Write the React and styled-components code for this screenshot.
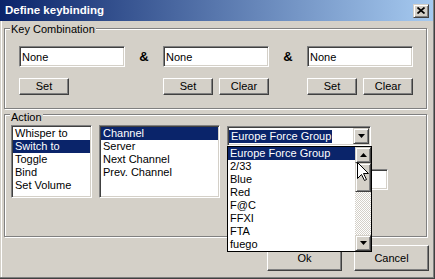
import styled, { css, createGlobalStyle } from "styled-components";

const GlobalStyle = createGlobalStyle`
  html, body {
    margin: 0;
    padding: 0;
    background: #d4d0c8;
  }
  body {
    font-family: "Liberation Sans", Arial, sans-serif;
    font-size: 11px;
    color: #000;
  }
`;

const actions = ["Whisper to", "Switch to", "Toggle", "Bind", "Set Volume"];
const targets = ["Channel", "Server", "Next Channel", "Prev. Channel"];
const channels = ["Europe Force Group", "2/33", "Blue", "Red", "F@C", "FFXI", "FTA", "fuego"];

// classic 3d edges
const raised = css`
  border: 1px solid;
  border-color: #fff #404040 #404040 #fff;
  box-shadow: inset -1px -1px 0 #808080;
`;

const raisedSmall = css`
  border: 1px solid;
  border-color: #d4d0c8 #404040 #404040 #d4d0c8;
  box-shadow: inset 1px 1px 0 #fff, inset -1px -1px 0 #808080;
`;

const sunken = css`
  border: 1px solid;
  border-color: #808080 #fff #fff #808080;
  box-shadow: inset 1px 1px 0 #404040, inset -1px -1px 0 #d4d0c8;
`;

const Window = styled.div`
  position: relative;
  width: 435px;
  height: 279px;
  box-sizing: border-box;
  display: flex;
  flex-direction: column;
  background: #d4d0c8;
  padding: 0 1px 1px 0;
  border-right: 1px solid #404040;
  border-bottom: 1px solid #404040;
  box-shadow: inset -1px -1px 0 #808080;
  overflow: hidden;
`;

const TitleBar = styled.div`
  height: 21px;
  flex-shrink: 0;
  display: flex;
  align-items: center;
  justify-content: space-between;
  padding: 0 4px 0 5px;
  background: linear-gradient(to right, #0a246a, #a6caf0);
  color: #fff;
  font-weight: bold;
  font-size: 11.5px;
  line-height: 13px;
`;

const CloseButton = styled.div`
  width: 16px;
  height: 14px;
  box-sizing: border-box;
  ${raisedSmall};
  background: #d4d0c8;
  display: flex;
  align-items: center;
  justify-content: center;
`;

const Body = styled.div`
  flex: 1;
  display: flex;
  flex-direction: column;
  padding: 7px 0 0 4px;
  box-shadow: inset 1px 0 0 #d4d0c8, inset 2px 0 0 #fff;
`;

const GroupBox = styled.div`
  position: relative;
  width: 423px;
  height: ${(p) => p.$height}px;
  margin-top: ${(p) => p.$gap || 0}px;
  box-sizing: border-box;
  border: 1px solid #808080;
  box-shadow: inset 1px 1px 0 #fff, 1px 1px 0 #fff;
`;

const GroupLabel = styled.span`
  position: absolute;
  left: 5px;
  top: ${(p) => p.$top}px;
  padding: 0 1px;
  line-height: 13px;
  background: #d4d0c8;
`;

const KeyRow = styled.div`
  display: flex;
  align-items: flex-start;
  padding: 17px 0 0 14px;
`;

const KeyColumn = styled.div`
  width: 106px;
  display: flex;
  flex-direction: column;
  gap: 11px;
`;

const Amp = styled.div`
  width: 38px;
  height: 21px;
  line-height: 21px;
  text-align: center;
  font-weight: bold;
  font-size: 13px;
`;

const TextBox = styled.div`
  width: ${(p) => p.$width || 106}px;
  height: 21px;
  box-sizing: border-box;
  ${sunken};
  background: #fff;
  padding-left: 2px;
  display: flex;
  align-items: center;
  align-self: ${(p) => (p.$right ? "flex-end" : "auto")};
  margin-top: ${(p) => p.$gap || 0}px;
`;

const ButtonRow = styled.div`
  display: flex;
  gap: 6px;
`;

const Button = styled.div`
  width: ${(p) => p.$width || 50}px;
  height: ${(p) => p.$height || 17}px;
  box-sizing: border-box;
  ${raised};
  background: #d4d0c8;
  display: flex;
  align-items: center;
  justify-content: center;
  line-height: 13px;
`;

const ActionRow = styled.div`
  display: flex;
  align-items: flex-start;
  gap: 7px;
  padding: 10px 0 0 6px;
`;

const ListBox = styled.div`
  width: ${(p) => p.$width}px;
  height: 73px;
  box-sizing: border-box;
  ${sunken};
  background: #fff;
  padding: 1px;
`;

const ListItem = styled.div`
  height: 13px;
  line-height: 13px;
  padding-left: 2px;
  white-space: nowrap;
  background: ${(p) => (p.$selected ? "#0a246a" : "transparent")};
  color: ${(p) => (p.$selected ? "#fff" : "#000")};
`;

const ComboColumn = styled.div`
  position: relative;
  width: 161px;
  display: flex;
  flex-direction: column;
`;

const Combo = styled.div`
  width: 144px;
  height: 20px;
  margin-top: 1px;
  box-sizing: border-box;
  ${sunken};
  background: #fff;
  padding: 1px;
  display: flex;
  align-items: center;
  justify-content: space-between;
`;

const ComboValue = styled.span`
  height: 13px;
  line-height: 13px;
  padding: 0 1px 0 2px;
  background: #0a246a;
  color: #fff;
`;

const ArrowButton = styled.div`
  width: 16px;
  height: 16px;
  flex-shrink: 0;
  box-sizing: border-box;
  ${raisedSmall};
  background: #d4d0c8;
  display: flex;
  align-items: center;
  justify-content: center;
`;

const DropList = styled.div`
  position: absolute;
  z-index: 2;
  left: 0;
  top: 21px;
  width: 145px;
  height: 106px;
  box-sizing: border-box;
  border: 1px solid #000;
  background: #fff;
  display: flex;
`;

const DropItems = styled.div`
  flex: 1;
`;

const ScrollBar = styled.div`
  width: 16px;
  display: flex;
  flex-direction: column;
`;

const ScrollThumb = styled.div`
  height: 29px;
  box-sizing: border-box;
  ${raisedSmall};
  background: #d4d0c8;
`;

const ScrollTrack = styled.div`
  flex: 1;
  background: repeating-conic-gradient(#d4d0c8 0 25%, #fff 0 50%) 0 0 / 2px 2px;
`;

const Footer = styled.div`
  display: flex;
  justify-content: flex-end;
  gap: 12px;
  margin-top: 8px;
  padding-right: 4px;
`;

const Pointer = styled.svg`
  position: absolute;
  z-index: 3;
  left: 357px;
  top: 162px;
`;

const Arrow = ({ up }) => (
  <svg width="7" height="4" viewBox="0 0 7 4">
    <path d={up ? "M3.5 0 L7 4 L0 4 Z" : "M0 0 L7 0 L3.5 4 Z"} fill="#000" />
  </svg>
);

export default function App() {
  return (
    <>
      <GlobalStyle />
      <Window>
        <TitleBar>
          <span>Define keybinding</span>
          <CloseButton>
            <svg width="8" height="7" viewBox="0 0 8 7">
              <path d="M0.5 0.5 L7.5 6.5 M7.5 0.5 L0.5 6.5" stroke="#000" strokeWidth="1.7" />
            </svg>
          </CloseButton>
        </TitleBar>
        <Body>
          <GroupBox $height={81}>
            <GroupLabel $top={-6}>Key Combination</GroupLabel>
            <KeyRow>
              <KeyColumn>
                <TextBox>None</TextBox>
                <ButtonRow>
                  <Button>Set</Button>
                </ButtonRow>
              </KeyColumn>
              <Amp>&amp;</Amp>
              <KeyColumn>
                <TextBox>None</TextBox>
                <ButtonRow>
                  <Button>Set</Button>
                  <Button>Clear</Button>
                </ButtonRow>
              </KeyColumn>
              <Amp>&amp;</Amp>
              <KeyColumn>
                <TextBox>None</TextBox>
                <ButtonRow>
                  <Button>Set</Button>
                  <Button>Clear</Button>
                </ButtonRow>
              </KeyColumn>
            </KeyRow>
          </GroupBox>

          <GroupBox $height={123} $gap={5}>
            <GroupLabel $top={-4}>Action</GroupLabel>
            <ActionRow>
              <ListBox $width={81}>
                {actions.map((a) => (
                  <ListItem key={a} $selected={a === "Switch to"}>{a}</ListItem>
                ))}
              </ListBox>
              <ListBox $width={121}>
                {targets.map((t) => (
                  <ListItem key={t} $selected={t === "Channel"}>{t}</ListItem>
                ))}
              </ListBox>
              <ComboColumn>
                <Combo>
                  <ComboValue>Europe Force Group</ComboValue>
                  <ArrowButton><Arrow /></ArrowButton>
                </Combo>
                <TextBox $width={60} $right $gap={23} />
                <DropList>
                  <DropItems>
                    {channels.map((c, i) => (
                      <ListItem key={c} $selected={i === 0}>{c}</ListItem>
                    ))}
                  </DropItems>
                  <ScrollBar>
                    <ArrowButton><Arrow up /></ArrowButton>
                    <ScrollThumb />
                    <ScrollTrack />
                    <ArrowButton><Arrow /></ArrowButton>
                  </ScrollBar>
                </DropList>
              </ComboColumn>
            </ActionRow>
          </GroupBox>

          <Footer>
            <Button $width={75} $height={26}>Ok</Button>
            <Button $width={75} $height={26}>Cancel</Button>
          </Footer>
        </Body>

        <Pointer width="12" height="20" viewBox="0 0 12 20">
          <path
            d="M0.5 0.5 L0.5 16.5 L4.5 12.5 L7.5 18.5 L9.5 17.5 L6.5 11.5 L11.5 11.5 Z"
            fill="#fff"
            stroke="#000"
            strokeWidth="1"
          />
        </Pointer>
      </Window>
    </>
  );
}
